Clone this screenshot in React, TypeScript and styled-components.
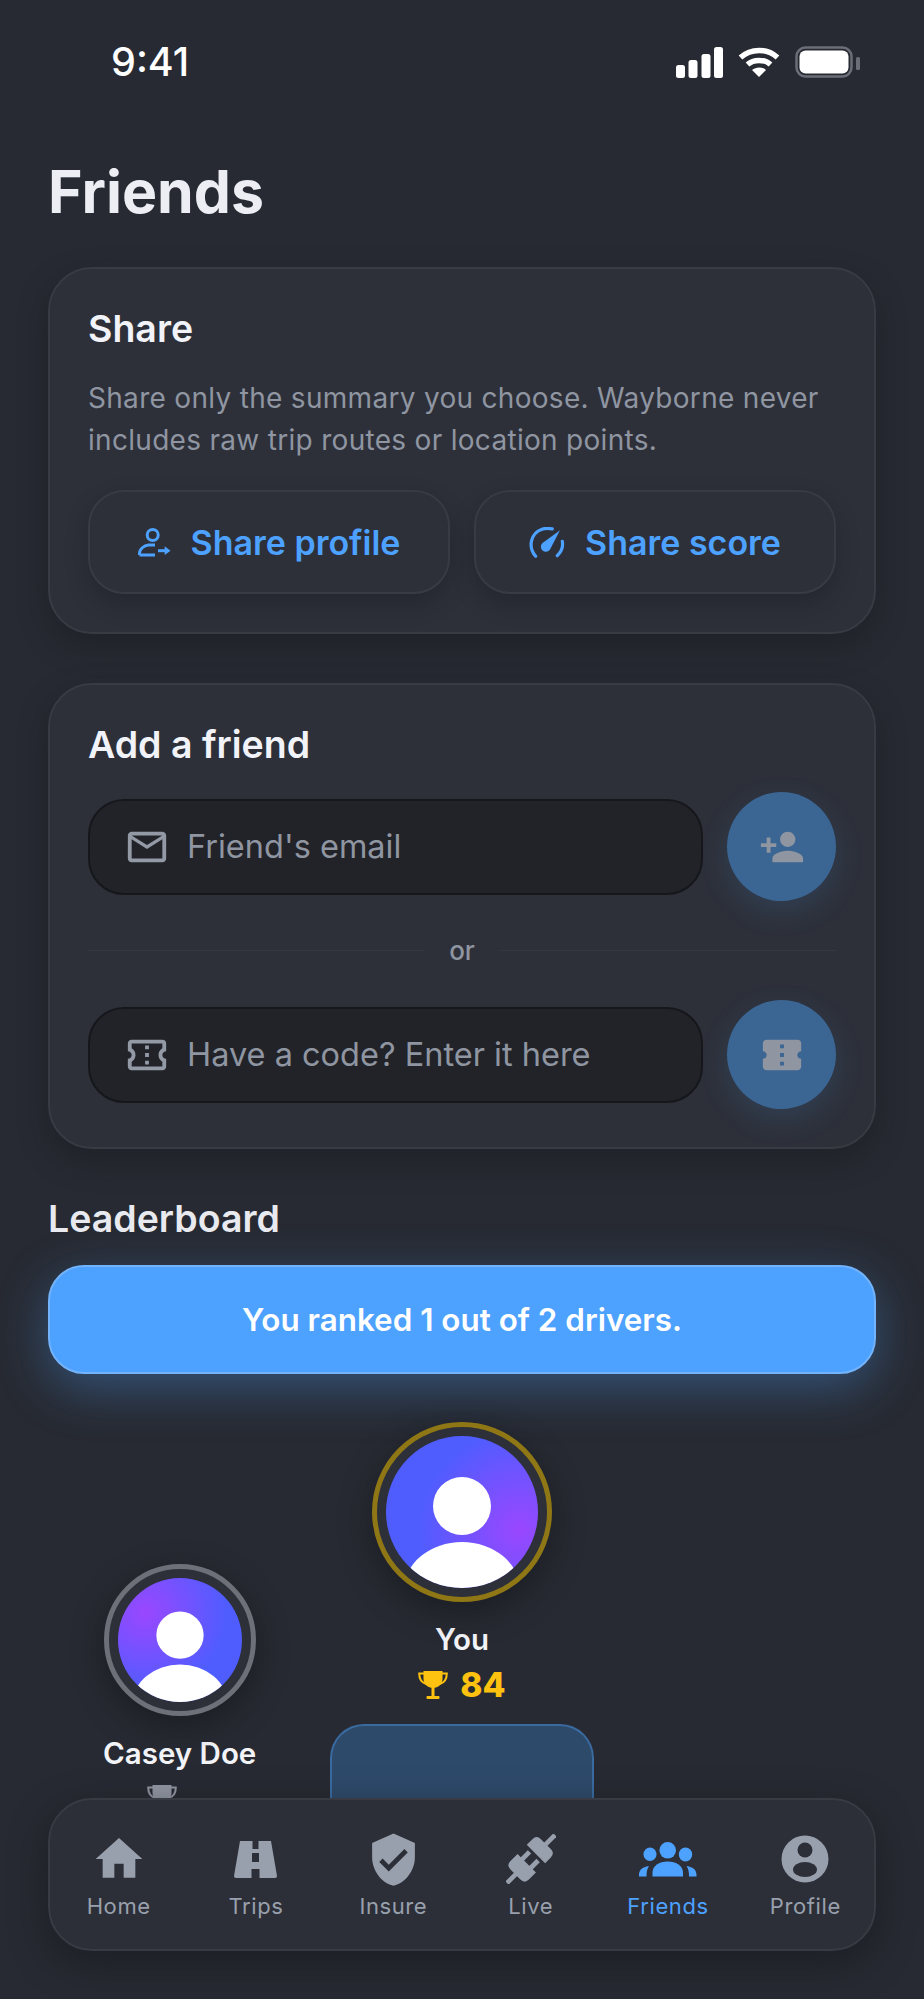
import React, { FC, ReactNode } from "react";
import styled, { createGlobalStyle } from "styled-components";
import {
  MdConfirmationNumber,
  MdHome,
  MdOutlineConfirmationNumber,
  MdOutlineMailOutline,
  MdPersonAdd,
  MdVerifiedUser,
} from "react-icons/md";

const GlobalStyle = createGlobalStyle`
  html, body {
    margin: 0;
    padding: 0;
    background: #272a32;
  }
  * {
    box-sizing: border-box;
  }
`;

const SignalIcon: FC = () => (
  <svg width="47" height="31" viewBox="0 0 47 31" fill="#fff">
    <rect x="0" y="18" width="9" height="13" rx="2.5" />
    <rect x="12.5" y="13" width="9" height="18" rx="2.5" />
    <rect x="25.5" y="7" width="9" height="24" rx="2.5" />
    <rect x="38" y="0" width="9" height="31" rx="2.5" />
  </svg>
);

const WifiIcon: FC = () => (
  <svg width="42" height="30" viewBox="0 0 42 30" fill="none" stroke="#fff" strokeWidth="5.5">
    <path d="M2.5 10.5C13 1 29 1 39.5 10.5" />
    <path d="M9.5 17.5C15.5 12 26.5 12 32.5 17.5" />
    <path d="M21 30 L14 23 C18 19.5 24 19.5 28 23 Z" fill="#fff" stroke="none" />
  </svg>
);

const BatteryIcon: FC = () => (
  <svg width="65" height="32" viewBox="0 0 65 32">
    <rect x="1.5" y="1.5" width="55" height="29" rx="9" fill="none" stroke="#6b6e76" strokeWidth="2.5" />
    <rect x="4.5" y="4.5" width="49" height="23" rx="6" fill="#fff" />
    <rect x="61" y="11" width="4" height="13" rx="1.5" fill="#6b6e76" />
  </svg>
);

const ShareProfileIcon: FC = () => (
  <svg width="33" height="29" viewBox="0 0 33 29" fill="none" stroke="#4da1ff" strokeWidth="3">
    <circle cx="14.700" cy="7" r="5.500" />
    <path d="M1.500 27v-1.500c0-4.500 4.500-8 9-8.500h6.500" />
    <path d="M1.500 27H17" />
    <path d="M20 22.700h8" />
    <path d="M26.700 18.300l5.800 4.400-5.800 4.400z" fill="#4da1ff" stroke="none" />
  </svg>
);

const GaugeIcon: FC = () => (
  <svg width="36" height="31" viewBox="0 0 36 31" fill="none" stroke="#4da1ff" strokeWidth="3.200" strokeLinecap="round">
    <path d="M6.700 29.300C-1.500 20 1.800 6 13 2.200c3.500-1.100 7-1 10.300-.3" />
    <path d="M28.300 28.700c4.500-4.500 6-9.500 5-14.400" />
    <path d="M31 3.300 L21 22.500a5 5 0 1 1-7.500-6.500z" fill="#4da1ff" stroke="none" />
  </svg>
);

const TrophyIcon: FC = () => (
  <svg width="30" height="30" viewBox="0 0 30 30">
    <path d="M5.500 1h19v8c0 5-4.500 9-9.500 9s-9.500-4-9.500-9z" fill="currentColor" />
    <path
      d="M6 3.500H1.200c0 5.500 2 9 7 10.500M24 3.500h4.800c0 5.500-2 9-7 10.500"
      fill="none"
      stroke="currentColor"
      strokeWidth="2"
    />
    <rect x="13.500" y="16" width="3" height="10" fill="currentColor" />
    <rect x="8.500" y="26" width="13" height="3" rx="1" fill="currentColor" />
  </svg>
);

const RoadIcon: FC = () => (
  <svg width="43" height="39" viewBox="0 0 43 39">
    <path d="M6 1h31l6 35q0 2-2 2H2q-2 0-2-2z" fill="currentColor" />
    <g fill="#2c2f38">
      <rect x="18.500" y="1" width="6" height="8" />
      <rect x="18" y="13" width="7" height="9" />
      <rect x="17.500" y="29" width="8" height="9" />
    </g>
  </svg>
);

const PlugIcon: FC = () => (
  <svg width="50" height="50" viewBox="0 0 50 50" fill="currentColor">
    <g transform="rotate(-45 25 25) translate(25 25)">
      <rect x="-34" y="-2.300" width="13" height="4.600" />
      <path d="M-22-7q0-6 6-6h10v26h-10q-6 0-6-6z" />
      <rect x="-7" y="-8.500" width="11" height="4.800" />
      <rect x="-7" y="3.700" width="11" height="4.800" />
      <path d="M7-13h8q6 0 6 6v14q0 6-6 6H7z" />
      <rect x="20" y="-2.300" width="14" height="4.600" />
    </g>
  </svg>
);

const FriendsIcon: FC = () => (
  <svg width="58" height="35" viewBox="0 0 58 35" fill="currentColor">
    <circle cx="28.700" cy="8.300" r="8.300" />
    <ellipse cx="11" cy="12.300" rx="6.500" ry="6.800" />
    <ellipse cx="46.500" cy="12.500" rx="6.700" ry="7" />
    <path d="M13.500 34.500v-4C13.500 24 20 19.500 28.700 19.500S44 24 44 30.500v4z" />
    <path d="M0 34.500v-1.500C0 28 3 25 10 24c-2 3-2.500 6-2.500 10.500z" />
    <path d="M57.500 34.500v-1.500c0-5-3-8-10-9 2 3 2.500 6 2.500 10.500z" />
  </svg>
);

const AccountIcon: FC = () => (
  <svg width="48" height="48" viewBox="0 0 48 48">
    <circle cx="24" cy="24" r="23.500" fill="currentColor" />
    <circle cx="24" cy="15" r="7.500" fill="#2c2f38" />
    <ellipse cx="24" cy="34.500" rx="12" ry="7.500" fill="#2c2f38" />
  </svg>
);

const Page = styled.div`
  position: relative;
  width: 924px;
  height: 1999px;
  overflow: hidden;
  padding: 0 48px;
  background: #272a32;
  font-family: Inter, "Noto Sans", sans-serif;
  color: #eef0f5;
`;

const StatusBar = styled.div`
  display: flex;
  align-items: center;
  justify-content: space-between;
  height: 124px;
  padding: 0 16px 0 63px;
`;

const Clock = styled.span`
  font-size: 39.5px;
  font-weight: 500;
  color: #fff;
`;

const StatusIcons = styled.div`
  display: flex;
  align-items: center;
  gap: 15px;
`;

const Title = styled.h1`
  margin: 0;
  height: 143px;
  padding-top: 33px;
  font-size: 59px;
  line-height: 70px;
  font-weight: 700;
  color: #eceef4;
`;

const Card = styled.section`
  padding: 38px;
  border: 2px solid #383b44;
  border-radius: 44px;
  background: #2d3039;
  box-shadow: 0 12px 30px rgba(18, 20, 25, 0.35);
  & + & {
    margin-top: 49px;
  }
`;

const CardTitle = styled.h2`
  margin: 0;
  font-size: 37.5px;
  line-height: 44px;
  font-weight: 600;
  color: #f1f3f8;
`;

const Description = styled.p`
  margin: 26px 0 0;
  font-size: 28px;
  line-height: 42px;
  color: #8f95a1;
  letter-spacing: 0.3px;
`;

const ShareRow = styled.div`
  display: grid;
  grid-template-columns: 1fr 1fr;
  gap: 24px;
  margin-top: 29px;
`;

const ShareButton = styled.button`
  display: flex;
  align-items: center;
  justify-content: center;
  gap: 20px;
  height: 104px;
  border: 2px solid #383b44;
  border-radius: 36px;
  background: #2d3039;
  box-shadow: 0 10px 22px rgba(18, 20, 25, 0.3);
  color: #4da1ff;
  font-family: inherit;
  font-size: 34px;
  font-weight: 600;
`;

const FriendForm = styled.div`
  margin-top: 25px;
`;

const InputRow = styled.div`
  display: flex;
  align-items: center;
  gap: 24px;
`;

const InputWrap = styled.label`
  display: flex;
  align-items: center;
  flex: 1;
  min-width: 0;
  gap: 17px;
  height: 96px;
  padding: 0 34px;
  border: 2px solid #15171b;
  border-radius: 36px;
  background: #212328;
  color: #939aa6;
`;

const Field = styled.input`
  flex: 1;
  min-width: 0;
  border: 0;
  outline: 0;
  padding: 0;
  background: transparent;
  color: #eef0f5;
  font-family: inherit;
  font-size: 32.5px;
  &::placeholder {
    color: #8f95a1;
    opacity: 1;
  }
`;

const RoundButton = styled.button`
  display: flex;
  align-items: center;
  justify-content: center;
  flex: none;
  width: 109px;
  height: 109px;
  padding: 0;
  border: 0;
  border-radius: 50%;
  background: #3b6592;
  box-shadow: 0 10px 30px rgba(77, 161, 255, 0.14);
  color: #8f95a1;
  font-size: 46px;
`;

const Divider = styled.div`
  display: flex;
  align-items: center;
  gap: 24px;
  height: 31px;
  margin: 34px 0;
  color: #8f95a1;
  font-size: 26px;
  font-weight: 500;
  &::before,
  &::after {
    content: "";
    flex: 1;
    height: 1px;
    background: #353841;
  }
`;

const SectionTitle = styled.h2`
  margin: 48px 0 0;
  font-size: 37.5px;
  line-height: 44px;
  font-weight: 600;
  color: #e8eaef;
`;

const Banner = styled.div`
  display: flex;
  align-items: center;
  justify-content: center;
  height: 109px;
  margin-top: 24px;
  border: 2px solid #72b3fb;
  border-radius: 36px;
  background: #4da1ff;
  box-shadow: 0 14px 50px rgba(77, 161, 255, 0.35);
  color: #fff;
  font-size: 31.4px;
  font-weight: 600;
`;

const Podium = styled.div`
  display: grid;
  grid-template-columns: repeat(3, 1fr);
  gap: 19px;
  align-items: end;
  height: 496px;
  margin-top: 48px;
`;

const PodiumColumn = styled.div`
  display: flex;
  flex-direction: column;
  align-items: center;
`;

const Avatar = styled.div<{ $size: number; $ring: string; $glow: string }>`
  position: relative;
  flex: none;
  width: ${(p) => p.$size}px;
  height: ${(p) => p.$size}px;
  overflow: hidden;
  border: 5px solid ${(p) => p.$ring};
  border-radius: 50%;
  background: #2d3039;
  box-shadow: 0 10px 30px rgba(16, 18, 22, 0.5);
  &::before {
    content: "";
    position: absolute;
    inset: 9px;
    border-radius: 50%;
    background: radial-gradient(circle at ${(p) => p.$glow}, #9a47ff 0%, #4f5dff 62%);
  }
`;

const AvatarFigure = styled.svg`
  position: absolute;
  inset: 9px;
`;

const PlayerName = styled.div`
  margin-top: 20px;
  font-size: 29.5px;
  line-height: 34px;
  font-weight: 600;
  color: #f3f4f8;
`;

const Score = styled.div<{ $color: string }>`
  display: flex;
  align-items: center;
  gap: 12px;
  height: 38px;
  margin-top: 10px;
  color: ${(p) => p.$color};
  font-size: 33.5px;
  line-height: 38px;
  font-weight: 800;
`;

const ScoreValue = styled.span<{ $hidden?: boolean }>`
  visibility: ${(p) => (p.$hidden ? "hidden" : "visible")};
`;

const Bar = styled.div<{ $height: number; $primary?: boolean }>`
  align-self: stretch;
  height: ${(p) => p.$height}px;
  margin-top: 20px;
  border: 2px solid ${(p) => (p.$primary ? "#3a6ba0" : "#24262c")};
  border-bottom: 0;
  border-radius: 34px 34px 0 0;
  background: ${(p) => (p.$primary ? "#2e4a6a" : "#24262c")};
`;

const TabBar = styled.nav`
  position: absolute;
  left: 48px;
  top: 1798px;
  display: grid;
  grid-template-columns: repeat(6, 1fr);
  width: 828px;
  height: 153px;
  padding-top: 31px;
  border: 2px solid #383b44;
  border-radius: 44px;
  background: #2c2f38;
  box-shadow: 0 12px 36px rgba(18, 20, 25, 0.5);
`;

const Tab = styled.div<{ $active?: boolean }>`
  display: flex;
  flex-direction: column;
  align-items: center;
  color: ${(p) => (p.$active ? "#4da1ff" : "#99a0ad")};
`;

const TabIcon = styled.div`
  display: flex;
  align-items: center;
  justify-content: center;
  height: 56px;
`;

const TabLabel = styled.span`
  margin-top: 5px;
  font-size: 22px;
  line-height: 28px;
  letter-spacing: 0.6px;
`;

const Figure: FC<{ size: number }> = ({ size }) => (
  <AvatarFigure width={size} height={size} viewBox="0 0 152 152">
    <defs>
      <clipPath id={`disc-${size}`}>
        <circle cx="76" cy="76" r="76" />
      </clipPath>
    </defs>
    <g clipPath={`url(#disc-${size})`} fill="#fff">
      <circle cx="76" cy="70" r="29" />
      <ellipse cx="76" cy="154" rx="58" ry="48" />
    </g>
  </AvatarFigure>
);

const tabs: { label: string; icon: ReactNode; active?: boolean }[] = [
  { label: "Home", icon: <MdHome size={56} /> },
  { label: "Trips", icon: <RoadIcon /> },
  { label: "Insure", icon: <MdVerifiedUser size={57} /> },
  { label: "Live", icon: <PlugIcon /> },
  { label: "Friends", icon: <FriendsIcon />, active: true },
  { label: "Profile", icon: <AccountIcon /> },
];

const App: FC = () => (
  <>
    <GlobalStyle />
    <Page>
      <StatusBar>
        <Clock>9:41</Clock>
        <StatusIcons>
          <SignalIcon />
          <WifiIcon />
          <BatteryIcon />
        </StatusIcons>
      </StatusBar>
      <Title>Friends</Title>

      <Card>
        <CardTitle>Share</CardTitle>
        <Description>
          Share only the summary you choose. Wayborne never includes raw trip
          routes or location points.
        </Description>
        <ShareRow>
          <ShareButton>
            <ShareProfileIcon />
            Share profile
          </ShareButton>
          <ShareButton>
            <GaugeIcon />
            Share score
          </ShareButton>
        </ShareRow>
      </Card>

      <Card>
        <CardTitle>Add a friend</CardTitle>
        <FriendForm>
          <InputRow>
            <InputWrap>
              <MdOutlineMailOutline size={46} />
              <Field placeholder="Friend's email" />
            </InputWrap>
            <RoundButton>
              <MdPersonAdd />
            </RoundButton>
          </InputRow>
          <Divider>or</Divider>
          <InputRow>
            <InputWrap>
              <MdOutlineConfirmationNumber size={46} />
              <Field placeholder="Have a code? Enter it here" />
            </InputWrap>
            <RoundButton>
              <MdConfirmationNumber />
            </RoundButton>
          </InputRow>
        </FriendForm>
      </Card>

      <SectionTitle>Leaderboard</SectionTitle>
      <Banner>You ranked 1 out of 2 drivers.</Banner>

      <Podium>
        <PodiumColumn>
          <Avatar $size={152} $ring="#6d7078" $glow="22% 28%">
            <Figure size={124} />
          </Avatar>
          <PlayerName>Casey Doe</PlayerName>
          <Score $color="#8f95a1">
            <TrophyIcon />
            <ScoreValue $hidden>0</ScoreValue>
          </Score>
          <Bar $height={80} />
        </PodiumColumn>
        <PodiumColumn>
          <Avatar $size={180} $ring="#8f7716" $glow="88% 62%">
            <Figure size={152} />
          </Avatar>
          <PlayerName>You</PlayerName>
          <Score $color="#fdc20f">
            <TrophyIcon />
            <ScoreValue>84</ScoreValue>
          </Score>
          <Bar $height={194} $primary />
        </PodiumColumn>
        <PodiumColumn />
      </Podium>

      <TabBar>
        {tabs.map((tab) => (
          <Tab key={tab.label} $active={tab.active}>
            <TabIcon>{tab.icon}</TabIcon>
            <TabLabel>{tab.label}</TabLabel>
          </Tab>
        ))}
      </TabBar>
    </Page>
  </>
);

export default App;
